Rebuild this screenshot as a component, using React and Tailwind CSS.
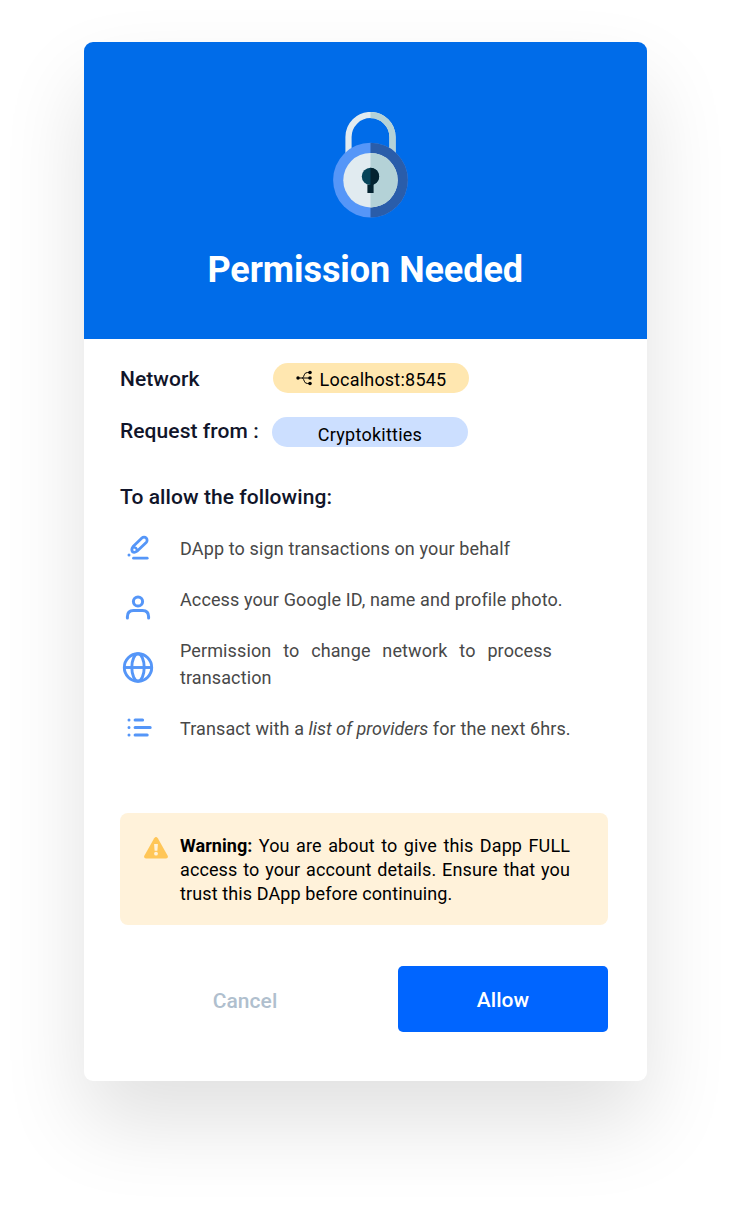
const PERMISSION_BLUE = '#5596f8';

function LockIcon() {
  return (
    <svg width="76" height="106" viewBox="0 0 76 106" fill="none">
      <path d="M15.5 45V25A22 22 0 0 1 59.5 25V45" stroke="#e1ebf0" strokeWidth="6.2" />
      <path d="M59.5 45V25A22 22 0 0 0 37.5 3.1" stroke="#b4d2d7" strokeWidth="6.2" />
      <circle cx="37.5" cy="68.1" r="37.4" fill="#5596f8" />
      <path d="M37.5 30.7a37.4 37.4 0 0 1 0 74.8z" fill="#2a5daa" />
      <circle cx="37.5" cy="68.2" r="27.2" fill="#e1ebf0" />
      <path d="M37.5 41a27.2 27.2 0 0 1 0 54.4z" fill="#b4d2d7" />
      <circle cx="37.5" cy="64.4" r="8.7" fill="#064358" />
      <path d="M37.5 55.7a8.7 8.7 0 0 1 3.1 16.8V81h-6.2v-8.3h3.1z" fill="#042330" />
    </svg>
  );
}

function NetworkIcon() {
  return (
    <svg width="16" height="16" viewBox="0 0 16 16" fill="none" stroke="#000" strokeWidth="1">
      <path d="M2 8H14M14 2.5H11.5Q9 2.5 8.3 4.8Q7.7 6.8 6.5 8Q7.7 9.2 8.3 11.2Q9 13.5 11.5 13.5H14" />
      <g fill="#000" stroke="none">
        <circle cx="2" cy="8" r="1.7" />
        <circle cx="14" cy="2.5" r="1.8" />
        <circle cx="14" cy="8" r="1.8" />
        <circle cx="14" cy="13.5" r="1.8" />
      </g>
    </svg>
  );
}

function SignIcon() {
  return (
    <svg width="36" height="36" viewBox="0 0 36 36" fill="none" stroke={PERMISSION_BLUE} strokeWidth="2.8" strokeLinecap="round" strokeLinejoin="round">
      <path d="M13.1 16.6L21.9 8.1A2.9 2.9 0 0 1 26.2 12.4L17 21.2Q14.4 23.1 12.5 21.8Q10.9 19.4 13.1 16.6Z" />
      <path d="M13.7 17.3Q16.9 17.3 17 20.6" strokeWidth="2.2" />
      <path d="M13.5 28.2H27.2" />
      <circle cx="9" cy="25.1" r="1.5" fill={PERMISSION_BLUE} stroke="none" />
    </svg>
  );
}

function UserIcon() {
  return (
    <svg width="36" height="36" viewBox="0 0 36 36" fill="none" stroke={PERMISSION_BLUE} strokeWidth="3" strokeLinecap="round">
      <circle cx="18" cy="11.5" r="4.6" />
      <path d="M7.4 28V26.8Q7.4 20.6 13.5 20.6H22.5Q28.6 20.6 28.6 26.8V28" />
    </svg>
  );
}

function GlobeIcon() {
  return (
    <svg width="36" height="36" viewBox="0 0 36 36" fill="none" stroke={PERMISSION_BLUE} strokeWidth="2.9">
      <circle cx="18" cy="17.5" r="13.7" />
      <ellipse cx="18" cy="17.5" rx="6.2" ry="13.7" />
      <path d="M4.2 17.5H31.8" />
    </svg>
  );
}

function ListIcon() {
  return (
    <svg width="36" height="36" viewBox="0 0 36 36" fill="none" stroke={PERMISSION_BLUE} strokeWidth="3" strokeLinecap="round">
      <path d="M15.1 10H22.6M15.1 17.5H30.2M15.1 25H27.2" />
      <path d="M9 10h.01M9 17.5h.01M9 25h.01" />
    </svg>
  );
}

function WarningIcon() {
  return (
    <svg width="24" height="22" viewBox="0 0 24 22">
      <path d="M10.2 1.2Q12-1.2 13.8 1.2L23.7 18.7Q24.5 21.4 22 21.5H2Q-.5 21.4.3 18.7Z" fill="#ffc657" />
      <path d="M10.1 7.1h3.8l-.5 6.6h-2.8z" fill="#fff2da" />
      <circle cx="12" cy="16.7" r="1.9" fill="#fff2da" />
    </svg>
  );
}

export default function App() {
  return (
    <div className="min-h-[1209px] w-[732px] overflow-hidden bg-white pt-[42px] pl-[84px] font-['Roboto',sans-serif]">
      <main className="flex h-[1039px] w-[562.5px] flex-col overflow-hidden rounded-[9px] bg-white shadow-[0_42px_84px_rgba(0,0,0,0.12)]">
        <header className="flex h-[297px] shrink-0 flex-col items-center bg-[#006ce9] pt-[70px]">
          <div className="pl-3"><LockIcon /></div>
          <h1 className="mt-7 text-[36px] leading-[48px] font-bold tracking-[-0.05px] whitespace-nowrap text-white">Permission Needed</h1>
        </header>

        <div className="flex flex-col pr-[39px] pl-9">
          <section className="pt-6 text-[21px] font-medium tracking-[0.07px] text-[#11152a]">
            <div className="flex h-[30px] items-center">
              <span className="w-[153px] pt-[3px]">Network</span>
              <span className="flex h-[30px] w-[196px] items-center justify-center gap-2 rounded-full bg-[#ffe7b0] pt-[2px] text-[18px] font-normal tracking-[0.22px] text-black">
                <span className="-mt-[3px]"><NetworkIcon /></span>
                Localhost:8545
              </span>
            </div>
            <div className="mt-6 flex h-[30px] items-center">
              <span className="w-[151.5px] pb-px">Request from :</span>
              <span className="flex h-[30px] w-[196px] items-center justify-center rounded-full bg-[#ccdfff] pt-[5px] pl-px text-[18px] font-normal tracking-[0.25px] text-black">
                Cryptokitties
              </span>
            </div>
          </section>

          <h2 className="mt-9 text-[21px] leading-[28px] font-medium tracking-[0.07px] text-[#11152a]">To allow the following:</h2>

          <section className="mt-[19px] flex gap-6">
            <div className="flex flex-col gap-6">
              <SignIcon />
              <UserIcon />
              <GlobeIcon />
              <ListIcon />
            </div>
            <div className="flex flex-col gap-6 pt-[5px] text-[18px] leading-[27px] tracking-[0.11px] whitespace-nowrap text-[#484848]">
              <p className="tracking-[0.14px]">DApp to sign transactions on your behalf</p>
              <p>Access your Google ID, name and profile photo.</p>
              <p className="w-[372px] text-justify whitespace-normal">Permission to change network to process transaction</p>
              <p>Transact with a <em className="tracking-[-0.03px]">list of providers</em> for the next 6hrs.</p>
            </div>
          </section>

          <section className="mt-[67px] flex h-[112px] rounded-[8px] bg-[#fff2da] pl-6">
            <div className="w-9 pt-6"><WarningIcon /></div>
            <p className="w-[390px] pt-[21px] text-justify text-[18px] leading-[24px] tracking-[0.11px] text-black">
              <strong className="font-bold tracking-[0.05px]">Warning:</strong> You are about to give this Dapp FULL access to your account details. Ensure that you trust this DApp before continuing.
            </p>
          </section>

          <div className="mt-[41px] flex justify-between text-[21px] font-medium tracking-[0.07px]">
            <button className="h-[66px] w-[250px] pt-[6px] text-[#b0bfce]">Cancel</button>
            <button className="h-[66px] w-[210px] rounded-[5px] bg-[#0065ff] pt-1 pl-px text-white">Allow</button>
          </div>
        </div>
      </main>
    </div>
  );
}
